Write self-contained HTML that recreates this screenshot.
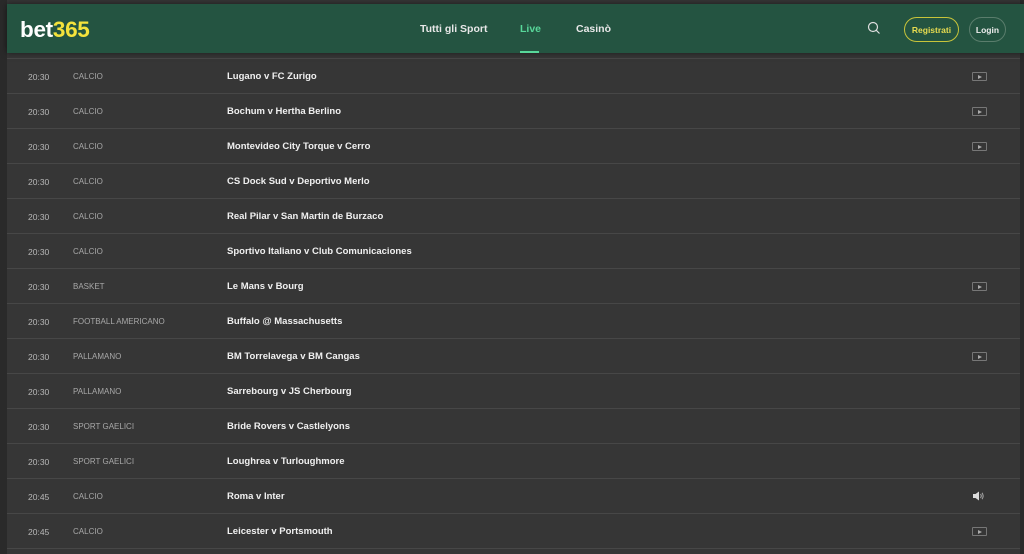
<!DOCTYPE html>
<html><head><meta charset="utf-8"><style>
*{margin:0;padding:0;box-sizing:border-box}
html,body{width:1024px;height:554px;overflow:hidden}
body{background:#2a2a2a;font-family:"Liberation Sans",Arial,sans-serif;position:relative}
.page{position:absolute;left:7px;top:0;width:1013px;height:554px;background:#363636}
.hdr{position:absolute;left:0;top:4px;width:1017px;height:49px;background:#245441;box-shadow:0 0 6px rgba(0,0,0,.5);z-index:2}
.logo{position:absolute;left:13px;top:13px;font-weight:bold;font-size:22.5px;color:#fff;letter-spacing:-0.3px}
.logo span{color:#f4e23c}
.nav{position:absolute;top:19px;font-size:10.5px;font-weight:bold;color:#e8e8e8}
.live{color:#58d79a}
.uline{position:absolute;left:513px;top:47px;width:19px;height:2px;background:#58d79a}
.btn{position:absolute;top:13px;height:25px;border-radius:13px;font-size:8.5px;font-weight:bold;display:flex;align-items:center;justify-content:center}
.reg{left:897px;width:55px;border:1.5px solid #c8c43a;color:#e8dc50}
.log{left:962px;width:37px;border:1px solid #5a7d6c;color:#eee}
.rows{position:absolute;left:7px;top:0;width:1013px;height:554px;overflow:hidden}
.row{position:absolute;left:0;width:1013px;height:35px;border-top:1px solid #474747}
.t{position:absolute;left:21px;top:13px;font-size:8.5px;color:#b8b8b8}
.s{position:absolute;left:66px;top:13px;font-size:8px;color:#a8a8a8}
.m{position:absolute;left:220px;top:12px;font-size:9.5px;font-weight:bold;color:#f0f0f0}
.v{position:absolute;left:965px;top:13px;width:15px;height:9px;border:1px solid #777;border-radius:1px}
.v:after{content:"";position:absolute;left:5px;top:2px;border-left:4px solid #aaa;border-top:2px solid transparent;border-bottom:2px solid transparent}
.a{position:absolute;left:966px;top:12px}
</style></head><body>
<div class="page"></div>
<div class="hdr" style="left:7px">
<div class="logo">bet<span>365</span></div>
<div class="nav" style="left:413px">Tutti gli Sport</div>
<div class="nav live" style="left:513px">Live</div>
<div class="nav" style="left:569px">Casinò</div>
<div class="uline"></div>
<svg style="position:absolute;left:860px;top:17px" width="14" height="14" viewBox="0 0 14 14"><circle cx="6" cy="6" r="4.5" fill="none" stroke="#ddd" stroke-width="1.2"/><path d="M9.3 9.3L12.5 12.5" stroke="#ddd" stroke-width="1.2"/></svg>
<div class="btn reg">Registrati</div>
<div class="btn log">Login</div>
</div>
<div class="rows">
<div class="row" style="top:58px"><div class="t">20:30</div><div class="s">CALCIO</div><div class="m">Lugano v FC Zurigo</div><div class="v"></div></div>
<div class="row" style="top:93px"><div class="t">20:30</div><div class="s">CALCIO</div><div class="m">Bochum v Hertha Berlino</div><div class="v"></div></div>
<div class="row" style="top:128px"><div class="t">20:30</div><div class="s">CALCIO</div><div class="m">Montevideo City Torque v Cerro</div><div class="v"></div></div>
<div class="row" style="top:163px"><div class="t">20:30</div><div class="s">CALCIO</div><div class="m">CS Dock Sud v Deportivo Merlo</div></div>
<div class="row" style="top:198px"><div class="t">20:30</div><div class="s">CALCIO</div><div class="m">Real Pilar v San Martin de Burzaco</div></div>
<div class="row" style="top:233px"><div class="t">20:30</div><div class="s">CALCIO</div><div class="m">Sportivo Italiano v Club Comunicaciones</div></div>
<div class="row" style="top:268px"><div class="t">20:30</div><div class="s">BASKET</div><div class="m">Le Mans v Bourg</div><div class="v"></div></div>
<div class="row" style="top:303px"><div class="t">20:30</div><div class="s">FOOTBALL AMERICANO</div><div class="m">Buffalo @ Massachusetts</div></div>
<div class="row" style="top:338px"><div class="t">20:30</div><div class="s">PALLAMANO</div><div class="m">BM Torrelavega v BM Cangas</div><div class="v"></div></div>
<div class="row" style="top:373px"><div class="t">20:30</div><div class="s">PALLAMANO</div><div class="m">Sarrebourg v JS Cherbourg</div></div>
<div class="row" style="top:408px"><div class="t">20:30</div><div class="s">SPORT GAELICI</div><div class="m">Bride Rovers v Castlelyons</div></div>
<div class="row" style="top:443px"><div class="t">20:30</div><div class="s">SPORT GAELICI</div><div class="m">Loughrea v Turloughmore</div></div>
<div class="row" style="top:478px"><div class="t">20:45</div><div class="s">CALCIO</div><div class="m">Roma v Inter</div><svg class="a" width="12" height="10" viewBox="0 0 12 10"><path d="M0 3H2.5L6 0.5V9.5L2.5 7H0Z" fill="#ddd"/><path d="M7.5 3Q9 5 7.5 7M9 1.8Q11.3 5 9 8.2" stroke="#aaa" fill="none" stroke-width="1"/></svg></div>
<div class="row" style="top:513px"><div class="t">20:45</div><div class="s">CALCIO</div><div class="m">Leicester v Portsmouth</div><div class="v"></div></div>
<div class="row" style="top:548px;height:6px"></div>
</div>
</body></html>
